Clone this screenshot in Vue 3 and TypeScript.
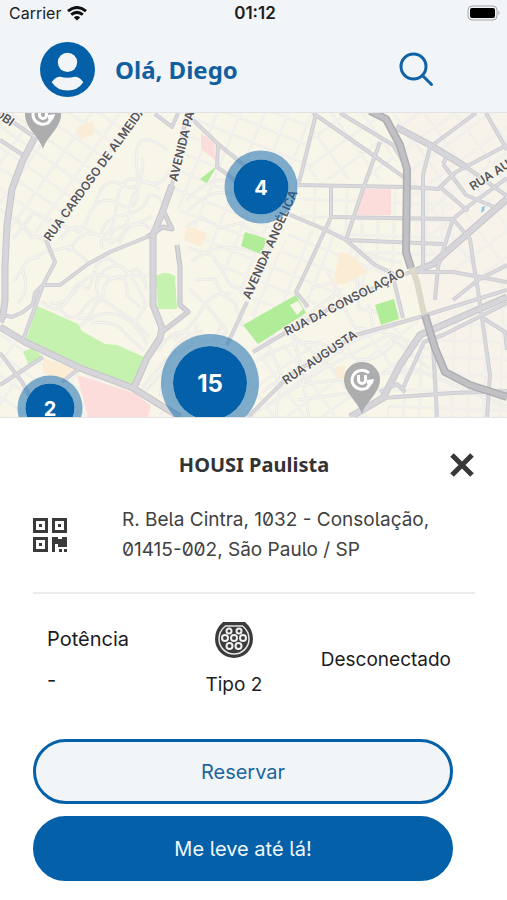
<script setup lang="ts">
interface Cluster {
  count: number
  x: number
  y: number
  size: 'small' | 'medium' | 'large'
}

const MAP_WIDTH = 507

const clusters: Cluster[] = [
  { count: 4, x: 261, y: 74, size: 'medium' },
  { count: 15, x: 210, y: 270, size: 'large' },
  { count: 2, x: 50, y: 295, size: 'small' },
]

const stations = [
  { name: 'Estação Perdizes', x: 43, y: 10 },
  { name: 'Estação Augusta', x: 362, y: 275 },
]

const place = (p: { x: number; y: number }) => ({
  left: `${(p.x / MAP_WIDTH) * 100}%`,
  top: `${p.y}px`,
})

// Streets are drawn twice, a darker casing below and a lighter core on top.
const streets: string[] = [
  'M0 140L23 155',
  'M0 113L33 136',
  'M46 240L55 262L43 285L35 293L33 304L23 312L12 317L3 315',
  'M43 285L23 340',
  'M43 285L60 285L88 264L110 252L147 237',
  'M155 114L172 127L178 113',
  'M193 120L218 144L240 162L262 178',
  'M218 144L217 167L236 181',
  'M0 353L22 382L32 400',
  'M0 385L43 357',
  'M80 368L62 382',
  'M247 302L227 345',
  'M187 113L172 185L162 213',
  'M316 114L301 175L298 185',
  'M313 113L366 150L405 178',
  'M340 113L393 145L404 163',
  'M380 142L363 189L346 240',
  'M298 185L405 187L440 189',
  'M331 187L331 217L308 267L296 292L308 307',
  'M331 217L453 219',
  'M286 213L326 230L346 240L443 244',
  'M346 240L375 265L392 273L403 318',
  'M486 113L507 150',
  'M476 113L430 147L423 175L423 267',
  'M507 145L456 172L440 187L468 211',
  'M443 164L466 195L494 207',
  'M443 164L446 158',
  'M453 219L470 239L474 267L478 290L483 325L490 375L487 417',
  'M453 219L438 267L435 300',
  'M507 178L470 205L453 219',
  'M466 167L507 196',
  'M253 352L285 333L340 303L410 272L453 272L507 282',
  'M248 417L290 375L356 335L420 317L507 290',
  'M403 388L424 342L443 335L507 303',
  'M433 345L437 417',
  'M383 398L453 393L507 391',
  'M483 318L505 332L507 350',
  'M453 300L478 280L507 265',
  'M380 392L397 384L405 392',
]

const avenues: string[] = [
  'M35 137L22 162L12 189L7 225L5 267L5 300L3 315L0 322',
  'M0 327L25 342L80 368L133 388L157 403L180 417',
  'M172 185L162 213L153 235L153 305L162 328L160 338L147 358L133 390',
  'M396 127L430 145L466 167',
  'M507 199L433 264L411 273',
  'M350 417L383 398L400 365L420 335L507 297',
]

const connectors: string[] = [
  'M177 245L180 267L180 305L188 312L162 332',
  'M147 237L163 227L172 229L163 210',
]

const highway: string[] = [
  'M370 111L386 119L400 145L407 169L406 252L411 268',
  'M425 315L435 348L445 372L470 385L507 397',
]

// Winding residential lanes between the larger streets.
const lanes: string[] = [
  'M138 113L46 240',
  'M298 185L247 302',
  'M60 240Q72 219 92 232T116 208T141 181T171 168',
  'M68 252Q83 225 103 238T130 209T160 190',
  'M85 226Q95 190 119 204T137 170T168 150',
  'M95 205Q103 174 123 185T143 158',
  'M102 249Q97 220 120 216T147 200T164 204',
  'M112 245Q106 229 125 226T152 216',
  'M119 244Q132 214 151 229',
  'M14 281L28 260L45 252L70 247L88 262',
  'M18 303Q29 290 24 275T40 257',
  'M42 301Q58 318 69 297T84 286T94 273T118 265T147 275',
  'M50 303Q64 307 77 289T102 275T119 279T132 271T147 290',
  'M58 307Q72 326 83 310T103 299Q102 281 115 277T127 295L141 308',
  'M76 317Q88 323 93 309T111 305T130 318T149 337',
  'M91 323Q112 320 121 329T144 351',
  'M80 326Q100 309 118 315T147 344',
  'M101 300Q90 282 105 270T133 279T145 307L134 324',
  'M186 227L202 217L220 228L241 223L259 236',
  'M188 211Q213 187 230 194T259 208',
  'M186 201Q213 171 236 184',
  'M189 248L213 256L231 286L249 291',
  'M191 262Q214 243 241 249T270 240',
  'M194 280L215 279L221 293L235 303L243 327',
  'M189 288L209 308L227 331L215 344',
  'M174 340Q192 327 202 309T231 294',
  'M158 351Q175 323 196 337T221 322',
  'M146 391Q164 373 171 355T203 331',
  'M139 392L166 359L191 345L197 324',
  'M160 397L164 373L180 369',
  'M261 359Q304 330 339 351T395 341L430 369',
  'M262 392L301 365L346 344L406 321',
  'M266 407L325 368L390 334L428 349',
  'M276 417L281 373L267 342L280 324L338 374',
  'M309 417L300 362L291 331L317 307L342 289',
  'M311 288L347 279L358 253L402 263',
  'M328 272L343 305L355 328L367 329',
  'M357 277L359 309L402 315',
  'M369 304L373 328L397 340',
  'M300 385L416 369L507 407',
  'M298 400L407 385',
  'M0 210L17 219L31 236L47 240',
  'M13 239L34 212L54 222L82 233',
]
</script>

<template>
  <div class="app">
    <header class="header">
      <div class="status">
        <span class="carrier">
          Carrier
          <svg class="wifi" viewBox="0 0 20 15" aria-hidden="true">
            <path d="M1 5.2Q10-2.2 19 5.2" />
            <path d="M4.2 8.7Q10 4 15.8 8.7" />
            <path class="solid" d="M6.8 11.4Q10 8.7 13.2 11.4L10 14.6Z" />
          </svg>
        </span>
        <time class="clock">01:12</time>
        <svg class="battery" viewBox="0 0 34 16" aria-hidden="true">
          <rect class="case" x="1" y="1" width="29" height="14" rx="4" />
          <rect x="3" y="3" width="25" height="10" rx="2" />
          <path class="tip" d="M31.500 5.500Q33.500 8 31.500 10.500Z" />
        </svg>
      </div>
      <div class="topbar">
        <button class="profile" type="button" aria-label="Perfil">
          <svg viewBox="0 0 54 54" aria-hidden="true">
            <circle cx="27" cy="27" r="27" fill="#0461a9" />
            <circle cx="27" cy="20" r="9.500" fill="#f2f5f7" />
            <path d="M11.500 39.500C14 36 17 33.500 20 34.200Q27 36.200 34 34.200C37 33.500 40 36 42.500 39.500Q37 47.700 27 47.700T11.500 39.500Z" fill="#f2f5f7" />
          </svg>
        </button>
        <h1 class="greeting">Olá, Diego</h1>
        <button class="search" type="button" aria-label="Buscar">
          <svg viewBox="0 0 36 36" aria-hidden="true">
            <circle cx="15.500" cy="15.500" r="12.500" />
            <path d="M24.500 24.500L33.500 33.500" />
          </svg>
        </button>
      </div>
    </header>

    <section class="map" aria-label="Mapa">
      <svg class="canvas" viewBox="0 113 507 304" preserveAspectRatio="xMinYMin slice">
        <defs>
          <pattern id="blocks-west" width="23" height="17" patternUnits="userSpaceOnUse" patternTransform="rotate(35)">
            <path class="lane-casing" d="M0 1H23M1 0V17" />
            <path class="lane" d="M0 1H23M1 0V17" />
          </pattern>
          <pattern id="blocks-center" width="22" height="18" patternUnits="userSpaceOnUse" patternTransform="rotate(22)">
            <path class="lane-casing" d="M0 1H22M1 0V18" />
            <path class="lane" d="M0 1H22M1 0V18" />
          </pattern>
          <pattern id="blocks-east" width="16" height="17" patternUnits="userSpaceOnUse" patternTransform="rotate(2)">
            <path class="lane-casing" d="M0 1H16M1 0V17" />
            <path class="lane" d="M0 1H16M1 0V17" />
          </pattern>
          <pattern id="blocks-north" width="25" height="21" patternUnits="userSpaceOnUse" patternTransform="rotate(-36)">
            <path class="lane-casing" d="M0 1H25M1 0V21" />
            <path class="lane" d="M0 1H25M1 0V21" />
          </pattern>
        </defs>

        <rect x="0" y="113" width="507" height="304" fill="#f8f5e9" />
        <path d="M404 113H507V417H440L420 300Z" fill="#f7f3ea" />

        <path fill="url(#blocks-west)" d="M0 113H138L90 180L42 245L0 225Z" />
        <path fill="url(#blocks-west)" d="M0 330L160 400L180 417H0Z" />
        <path fill="url(#blocks-center)" d="M190 113H315L298 185L247 302L192 235L170 190Z" />
        <path fill="url(#blocks-north)" d="M316 113H372L404 178L300 180Z" />
        <path fill="url(#blocks-east)" d="M300 187H441L455 220L436 266H375L345 242L300 220Z" />
        <path fill="url(#blocks-north)" d="M390 113H507V290L436 265L407 180Z" />
        <path fill="url(#blocks-center)" d="M295 222L350 245L400 273L270 342L247 310Z" />
        <path fill="url(#blocks-north)" d="M250 355L420 318L380 417H245Z" />
        <path fill="url(#blocks-east)" d="M426 318L507 295V417H385L400 370Z" />

        <g class="lane-casing"><path v-for="d in lanes" :key="d" :d="d" /></g>
        <g class="lane"><path v-for="d in lanes" :key="d" :d="d" /></g>

        <path class="sand" d="M76 128L93 121L94 134L80 140Z" />
        <path class="sand" d="M187 226L207 233L201 247L184 240Z" />
        <path class="sand" d="M340 252L350 254L367 272L345 284L333 284Z" />
        <path class="sand" d="M336 367L345 365L344 380L337 378Z" />
        <path class="sand" d="M43 358L76 369L62 380L43 373Z" />
        <path class="clinic" d="M201 133L214 143L216 161L201 149Z" />
        <path class="clinic" d="M363 189H391V215H357Z" />
        <path class="clinic" d="M77 375L135 393L151 406L148 417H88Z" />
        <path class="park" d="M37 306L78 324L82 331L105 344L117 345L144 357L133 388L26 340Z" />
        <path class="park" d="M23 352L32 348L43 357L29 365Z" />
        <path class="park" d="M156 276Q165 270 175 276L177 309H158Z" />
        <path class="park deep" d="M217 166L207 183L200 179Z" />
        <path class="park deep" d="M245 232L267 239L261 254L241 246Z" />
        <path class="park deep" d="M243 325L296 295L306 313L258 344Z" />
        <path class="park deep" d="M375 305L394 299L399 319L381 325Z" />
        <path fill="#f8f5e9" d="M290 305L298 301L303 309L297 315Z" />
        <path fill="#83cbed" d="M482 207L485 206L484 211L481 213Z" />

        <g class="street-casing"><path v-for="d in streets" :key="d" :d="d" /></g>
        <g class="connector-casing"><path v-for="d in connectors" :key="d" :d="d" /></g>
        <g class="avenue-casing"><path v-for="d in avenues" :key="d" :d="d" /></g>
        <g class="street"><path v-for="d in streets" :key="d" :d="d" /></g>
        <g class="connector"><path v-for="d in connectors" :key="d" :d="d" /></g>
        <g class="avenue"><path v-for="d in avenues" :key="d" :d="d" /></g>
        <path class="tunnel" d="M411 266L417 282L424 314" />
        <g class="highway-casing"><path v-for="d in highway" :key="d" :d="d" /></g>
        <g class="highway"><path v-for="d in highway" :key="d" :d="d" /></g>

        <g class="labels">
          <text transform="translate(-12 111) rotate(35)">JOBI</text>
          <text transform="translate(50 242) rotate(-54)">RUA CARDOSO DE ALMEIDA</text>
          <text transform="translate(177 182) rotate(-76)">AVENIDA PACAEMBU</text>
          <text transform="translate(250 300) rotate(-66)">AVENIDA ANGÉLICA</text>
          <text transform="translate(473 191) rotate(-33)">RUA AUGUSTA</text>
          <text transform="translate(287 336) rotate(-27)">RUA DA CONSOLAÇÃO</text>
          <text transform="translate(286 385) rotate(-34)">RUA AUGUSTA</text>
        </g>
      </svg>

      <button
        v-for="s in stations"
        :key="s.name"
        class="station"
        type="button"
        :aria-label="s.name"
        :style="place(s)"
      >
        <svg viewBox="0 0 36 52" aria-hidden="true">
          <path d="M18 52C14 39 0 31 0 17.500A18 17.500 0 0 1 36 17.500C36 31 22 39 18 52Z" fill="#adadad" />
          <path class="mark" d="M25 11A10 9.500 0 1 0 23 26L26 22M14.500 13V18A3.500 3.500 0 0 0 21.500 18V13" />
          <path d="M23 18L30 17L29 21L26 24L23 22Z" fill="#fff" />
        </svg>
      </button>
      <button
        v-for="c in clusters"
        :key="c.count"
        class="cluster"
        :class="c.size"
        type="button"
        :style="place(c)"
      >
        {{ c.count }}
      </button>
    </section>

    <main class="sheet">
      <div class="title-row">
        <h2 class="title">HOUSI Paulista</h2>
        <button class="close" type="button" aria-label="Fechar">
          <svg viewBox="0 0 26 26" aria-hidden="true"><path d="M3 3L23 23M23 3L3 23" /></svg>
        </button>
      </div>

      <div class="address-row">
        <svg class="qr" viewBox="0 0 34 34" aria-hidden="true">
          <path
            fill-rule="evenodd"
            d="M0 0H15V15H0ZM3 3V12H12V3ZM19 0H34V15H19ZM22 3V12H31V3ZM0 19H15V34H0ZM3 22V31H12V22ZM6 6H9V9H6ZM25 6H28V9H25ZM6 25H9V28H6ZM19 19H25V21H29V19H34V29H25V26H22V34H19ZM26 31H29V34H26ZM31 31H34V34H31Z"
          />
        </svg>
        <address class="address">R. Bela Cintra, 1032 - Consolação,<br />01415-002, São Paulo / SP</address>
      </div>

      <div class="specs">
        <dl class="power">
          <dt>Potência</dt>
          <dd>-</dd>
        </dl>
        <div class="plug">
          <svg viewBox="0 0 38 36" aria-hidden="true">
            <path d="M8 0H30Q38 7 38 17A19 19 0 0 1 0 17Q0 7 8 0Z" fill="#3b3b3b" />
            <path d="M10.500 4H27.500Q34 9 34 17A15 15 0 0 1 4 17Q4 9 10.500 4Z" fill="none" stroke="#e8e8e8" stroke-width="1.500" />
            <g fill="#3b3b3b" stroke="#f2f2f2" stroke-width="2">
              <circle cx="14" cy="9" r="2.500" />
              <circle cx="24" cy="9" r="2.500" />
              <circle cx="10" cy="16" r="3" />
              <circle cx="19" cy="16" r="3" />
              <circle cx="28" cy="16" r="3" />
              <circle cx="14.500" cy="24" r="3" />
              <circle cx="23.500" cy="24" r="3" />
            </g>
          </svg>
          <span>Tipo 2</span>
        </div>
        <span class="state">Desconectado</span>
      </div>

      <div class="actions">
        <button class="action outline" type="button">Reservar</button>
        <button class="action filled" type="button">Me leve até lá!</button>
      </div>
    </main>
  </div>
</template>

<style>
body {
  margin: 0;
}
</style>

<style scoped>
.app {
  display: flex;
  flex-direction: column;
  min-height: 100vh;
  background: #fff;
  color: #1c1c1e;
  font-family: Inter, 'Liberation Sans', sans-serif;
}

button {
  padding: 0;
  border: 0;
  background: none;
  font: inherit;
  cursor: pointer;
}

svg {
  display: block;
}

.header {
  background: #f2f5f7;
  border-bottom: 1px solid #e2e3e6;
}

.status {
  display: grid;
  grid-template-columns: 1fr auto 1fr;
  align-items: center;
  height: 26px;
  padding: 0 6px 0 9px;
}

.carrier {
  display: flex;
  align-items: center;
  gap: 6px;
  font-size: 16px;
}

.wifi {
  width: 20px;
  height: 15px;
  fill: none;
  stroke: #111;
  stroke-width: 3;
}

.wifi .solid {
  fill: #111;
  stroke: none;
}

.clock {
  font-size: 17px;
  font-weight: 600;
}

.battery {
  width: 34px;
  height: 16px;
  justify-self: end;
}

.battery .case {
  fill: none;
  stroke: #a4a5a8;
  stroke-width: 1;
}

.battery .tip {
  fill: #a4a5a8;
}

.topbar {
  display: flex;
  align-items: center;
  height: 86px;
  padding: 0 73px 0 40px;
}

.profile svg {
  width: 55px;
  height: 55px;
}

.greeting {
  flex: 1;
  margin: 0 0 0 20px;
  color: #125f9f;
  font-family: 'Noto Sans', sans-serif;
  font-size: 24px;
  font-weight: 700;
}

.search svg {
  width: 36px;
  height: 36px;
  fill: none;
  stroke: #1263a5;
  stroke-width: 3;
  stroke-linecap: round;
}

.map {
  position: relative;
  flex: 1;
  min-height: 240px;
  overflow: hidden;
  background: #f8f5e9;
}

.canvas {
  position: absolute;
  inset: 0;
  width: 100%;
  height: 100%;
}

.canvas .lane,
.canvas .lane-casing,
.canvas .street,
.canvas .street-casing,
.canvas .connector,
.canvas .connector-casing,
.canvas .avenue,
.canvas .avenue-casing,
.canvas .highway,
.canvas .highway-casing,
.canvas .tunnel {
  fill: none;
  stroke-linejoin: round;
}

.canvas .lane-casing {
  stroke: #ebeae5;
  stroke-width: 3;
}

.canvas .lane {
  stroke: #f7f6f4;
  stroke-width: 1;
}

.canvas .street-casing {
  stroke: #cfced2;
  stroke-width: 4;
}

.canvas .street {
  stroke: #dad9dd;
  stroke-width: 2;
}

.canvas .connector-casing {
  stroke: #c5c4c9;
  stroke-width: 5;
}

.canvas .connector {
  stroke: #d5d4d9;
  stroke-width: 3;
}

.canvas .avenue-casing {
  stroke: #c7c6cb;
  stroke-width: 7;
}

.canvas .avenue {
  stroke: #d6d5da;
  stroke-width: 5;
}

.canvas .highway-casing {
  stroke: #adadb2;
  stroke-width: 8;
}

.canvas .highway {
  stroke: #c0c0c5;
  stroke-width: 5;
}

.canvas .tunnel {
  stroke: #ddd9c9;
  stroke-width: 6;
}

.park {
  fill: #c5f2ae;
}

.park.deep {
  fill: #b1ec98;
}

.sand {
  fill: #fbedd5;
}

.clinic {
  fill: #fddddc;
}

.labels {
  fill: #555459;
  stroke: #faf8f1;
  stroke-width: 2;
  paint-order: stroke;
  font-size: 12px;
  font-weight: 600;
}

.station,
.cluster {
  position: absolute;
  transform: translate(-50%, -50%);
}

.station svg {
  width: 36px;
  height: 52px;
}

.station .mark {
  fill: none;
  stroke: #fff;
  stroke-width: 3;
}

.cluster {
  border: 8px solid rgb(4 97 169 / 50%);
  border-radius: 50%;
  background: #0461a9;
  background-clip: padding-box;
  color: #fff;
  font-weight: 700;
  font-size: 20px;
}

.small {
  width: 65px;
  height: 65px;
}

.medium {
  width: 73px;
  height: 73px;
  border-width: 9px;
}

.large {
  width: 98px;
  height: 98px;
  border-width: 12px;
  font-size: 24px;
}

.sheet {
  padding: 32px 32px 19px 33px;
  border-top: 1px solid #e4e4e4;
}

.title-row {
  display: grid;
  grid-template-columns: 26px 1fr 26px;
  align-items: center;
}

.title {
  grid-column: 2;
  margin: 0;
  color: #333;
  font-family: 'Noto Sans', sans-serif;
  font-size: 20px;
  font-weight: 700;
  line-height: 30px;
  text-align: center;
}

.close svg {
  width: 26px;
  height: 26px;
  fill: none;
  stroke: #383838;
  stroke-width: 5;
}

.address-row {
  display: flex;
  align-items: center;
  gap: 55px;
  margin-top: 25px;
  padding-bottom: 27px;
  border-bottom: 2px solid #ececec;
}

.qr {
  flex: none;
  width: 34px;
  height: 34px;
  fill: #3a3a3a;
}

.address {
  color: #414141;
  font-size: 19px;
  font-style: normal;
  font-feature-settings: 'zero', 'cv05';
  line-height: 30px;
}

.specs {
  display: flex;
  align-items: center;
  justify-content: space-between;
  padding: 28px 24px 0 14px;
  font-size: 19px;
  line-height: 24px;
}

.power {
  display: grid;
  gap: 17px;
  min-width: 100px;
  margin: 0;
  font-size: 20px;
}

.power dd {
  margin: 0;
}

.plug {
  display: grid;
  justify-items: center;
  gap: 15px;
}

.plug svg {
  width: 38px;
  height: 36px;
}

.actions {
  display: grid;
  gap: 12px;
  margin: 42px 22px 0 0;
}

.action {
  height: 65px;
  border: 3px solid #0461a9;
  border-radius: 33px;
  font-size: 20px;
  font-feature-settings: 'cv05';
}

.outline {
  background: #f2f5f7;
  color: #1c659f;
}

.filled {
  background: #0461a9;
  color: #f1f7fc;
}
</style>
